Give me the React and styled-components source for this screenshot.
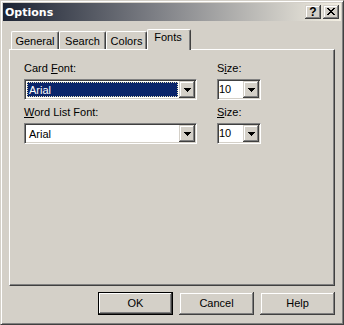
import React from 'react';
import styled, { createGlobalStyle } from 'styled-components';

const Global = createGlobalStyle`
  html, body { margin: 0; padding: 0; background: #d4d0c8; }
  body { font-family: "Liberation Sans", Arial, sans-serif; font-size: 11px; color: #000; }
  * { box-sizing: border-box; }
`;

const raised = `
  box-shadow: inset -1px -1px #404040, inset 1px 1px #d4d0c8, inset -2px -2px #808080, inset 2px 2px #fff;
`;

const Window = styled.div`
  width: 344px;
  height: 325px;
  background: #d4d0c8;
  border: 1px solid;
  border-color: #d4d0c8 #404040 #404040 #d4d0c8;
  box-shadow: inset 1px 1px #fff, inset -1px -1px #808080;
  padding: 2px;
  display: flex;
  flex-direction: column;
`;

const TitleBar = styled.div`
  height: 18px;
  flex: none;
  display: flex;
  align-items: center;
  padding: 0 2px;
  background: linear-gradient(to right, #1c2333, #7d7f85 45%, #f3efe3);
`;

const Title = styled.div`
  flex: 1;
  color: #fff;
  font-family: "DejaVu Sans", Verdana, sans-serif;
  font-weight: bold;
  font-size: 11px;
  line-height: 13px;
`;

const TitleButtons = styled.div`
  display: flex;
  gap: 2px;
`;

const CaptionButton = styled.div`
  width: 16px;
  height: 14px;
  background: #d4d0c8;
  ${raised}
  display: flex;
  align-items: center;
  justify-content: center;
  font-family: "Liberation Sans", Arial, sans-serif;
  font-weight: bold;
  font-size: 12px;
  line-height: 12px;
  padding-bottom: 1px;
`;

const Body = styled.div`
  flex: 1;
  display: flex;
  flex-direction: column;
  padding: 8px 6px 7px 6px;
`;

const TabStrip = styled.div`
  height: 20px;
  display: flex;
  align-items: flex-end;
  padding-left: 2px;
`;

const Tab = styled.div`
  width: ${p => p.$w}px;
  height: ${p => (p.$active ? 21 : 18)}px;
  margin-bottom: ${p => (p.$active ? -1 : 0)}px;
  position: relative;
  z-index: ${p => (p.$active ? 1 : 0)};
  background: #d4d0c8;
  border-left: 1px solid #fff;
  border-top: 1px solid #fff;
  border-right: 1px solid #404040;
  border-top-left-radius: 2px;
  border-top-right-radius: 2px;
  box-shadow: inset -1px 0 #808080;
  text-align: center;
  line-height: 13px;
  padding-top: ${p => (p.$active ? 1 : 3)}px;
  padding-right: ${p => (p.$active ? 2 : 0)}px;
`;

const Panel = styled.div`
  height: 237px;
  border: 1px solid;
  border-color: #fff #404040 #404040 #fff;
  box-shadow: inset -1px -1px #808080;
  padding: 12px 0 0 14px;
`;

const Form = styled.div`
  display: grid;
  grid-template-columns: 173px 44px;
  column-gap: 20px;
`;

const Label = styled.div`
  line-height: 13px;
  margin-bottom: 4px;
  white-space: nowrap;
`;

const Combo = styled.div`
  height: 21px;
  margin-bottom: 6px;
  display: flex;
  padding: 1px;
  background: #fff;
  border: 1px solid;
  border-color: #808080 #fff #fff #808080;
  box-shadow: inset 1px 1px #404040, inset -1px -1px #d4d0c8;
`;

const Field = styled.div`
  flex: 1;
  min-width: 0;
  display: flex;
  padding: ${p => (p.$tight ? '0' : '1px')};
`;

const Value = styled.div`
  flex: 1;
  line-height: 13px;
  padding-left: ${p => (p.$tight ? 0 : 1)}px;
  padding-top: ${p => (p.$tight ? 2 : 1)}px;
  border: 1px ${p => (p.$selected ? 'dotted #e8e0b8' : 'solid transparent')};
  ${p => (p.$tight ? 'border: none;' : '')}
  background: ${p => (p.$selected ? '#0a246a' : 'transparent')};
  color: ${p => (p.$selected ? '#fff' : '#000')};
`;

const DropButton = styled.div`
  width: 16px;
  height: 17px;
  flex: none;
  background: #d4d0c8;
  ${raised}
  display: flex;
  align-items: center;
  justify-content: center;
`;

const ButtonRow = styled.div`
  margin-top: 6px;
  display: flex;
  justify-content: flex-end;
  gap: 6px;
`;

const Button = styled.div`
  width: 75px;
  height: 23px;
  background: #d4d0c8;
  display: flex;
  align-items: center;
  justify-content: center;
  line-height: 13px;
  ${p =>
    p.$default
      ? `border: 1px solid #000; box-shadow: inset -1px -1px #404040, inset 1px 1px #fff, inset -2px -2px #808080;`
      : raised}
`;

const Arrow = () => (
  <svg width="7" height="4" viewBox="0 0 7 4" shapeRendering="crispEdges">
    <path d="M0 0h7v1h-1v1h-1v1h-1v1h-1v-1h-1v-1h-1v-1h-1z" fill="#000" />
  </svg>
);

const CloseGlyph = () => (
  <svg width="8" height="7" viewBox="0 0 8 7" shapeRendering="crispEdges">
    <path
      d="M0 0h2v1h1v1h2v-1h1v-1h2v1h-1v1h-1v1h-1v1h1v1h1v1h1v1h-2v-1h-1v-1h-2v1h-1v1h-2v-1h1v-1h1v-1h1v-1h-1v-1h-1v-1h-1z"
      fill="#000"
    />
  </svg>
);

const ComboBox = ({ value, selected, tight }) => (
  <Combo>
    <Field $tight={tight}>
      <Value $selected={selected} $tight={tight}>{value}</Value>
    </Field>
    <DropButton>
      <Arrow />
    </DropButton>
  </Combo>
);

export default function App() {
  return (
    <>
      <Global />
      <Window>
        <TitleBar>
          <Title>Options</Title>
          <TitleButtons>
            <CaptionButton>?</CaptionButton>
            <CaptionButton>
              <CloseGlyph />
            </CaptionButton>
          </TitleButtons>
        </TitleBar>
        <Body>
          <TabStrip>
            <Tab $w={48}>General</Tab>
            <Tab $w={47}>Search</Tab>
            <Tab $w={41}>Colors</Tab>
            <Tab $w={44} $active>Fonts</Tab>
          </TabStrip>
          <Panel>
            <Form>
              <Label>Card <u>F</u>ont:</Label>
              <Label>S<u>i</u>ze:</Label>
              <ComboBox value="Arial" selected />
              <ComboBox value="10" tight />
              <Label><u>W</u>ord List Font:</Label>
              <Label><u>S</u>ize:</Label>
              <ComboBox value="Arial" />
              <ComboBox value="10" tight />
            </Form>
          </Panel>
          <ButtonRow>
            <Button $default>OK</Button>
            <Button>Cancel</Button>
            <Button>Help</Button>
          </ButtonRow>
        </Body>
      </Window>
    </>
  );
}
